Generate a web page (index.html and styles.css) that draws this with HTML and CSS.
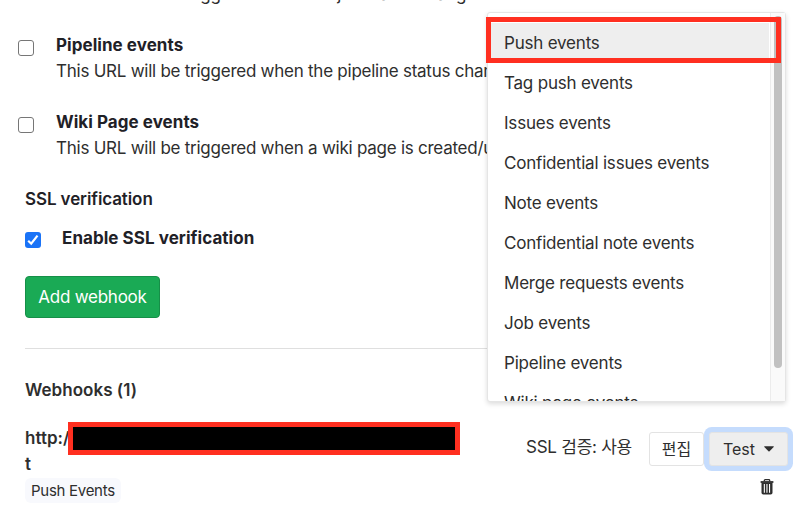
FILE: index.html
```html
<!DOCTYPE html>
<html lang="ko">
<head>
<meta charset="utf-8">
<title>Webhooks</title>
<link rel="stylesheet" href="styles.css">
</head>
<body>
<main class="page">
  <section class="triggers">
    <div class="trigger first">
      <span class="box-space"></span>
      <div class="trigger-text"><p class="desc">This URL will be triggered when the job status changes</p></div>
    </div>
    <div class="trigger">
      <input type="checkbox" class="check" id="pipeline">
      <div class="trigger-text">
        <label class="label" for="pipeline">Pipeline events</label>
        <p class="desc">This URL will be triggered when the pipeline status changes</p>
      </div>
    </div>
    <div class="trigger">
      <input type="checkbox" class="check" id="wiki">
      <div class="trigger-text">
        <label class="label" for="wiki">Wiki Page events</label>
        <p class="desc">This URL will be triggered when a wiki page is created/updated</p>
      </div>
    </div>
  </section>
  <h2 class="ssl-title">SSL verification</h2>
  <div class="ssl-row">
    <input type="checkbox" class="check" id="ssl" checked>
    <label class="label" for="ssl">Enable SSL verification</label>
  </div>
  <button class="add"><span>Add webhook</span></button>
  <hr class="rule">
  <h2 class="hooks-title">Webhooks (1)</h2>
  <div class="hook">
    <div class="hook-info">
      <div class="url"><span class="url-text">http:/</span><span class="redacted"></span></div>
      <div class="url url-end">t</div>
      <span class="badge">Push Events</span>
    </div>
    <div class="hook-side">
      <div class="actions">
        <span class="ssl-state">SSL 검증: 사용</span>
        <button class="btn edit">편집</button>
        <div class="test-wrap">
          <button class="btn test">Test<svg class="caret" width="10" height="6" viewBox="0 0 10 6"><path d="M.5.3h9q.5.2.2.6L5.5 5.3q-.5.4-1 0L.3.9Q0 .5.5.3z" fill="#2e2e2e"/></svg></button>
          <div class="menu">
            <ul class="items">
              <li class="item active">Push events</li>
              <li class="item">Tag push events</li>
              <li class="item">Issues events</li>
              <li class="item">Confidential issues events</li>
              <li class="item">Note events</li>
              <li class="item">Confidential note events</li>
              <li class="item">Merge requests events</li>
              <li class="item">Job events</li>
              <li class="item">Pipeline events</li>
              <li class="item">Wiki page events</li>
            </ul>
            <div class="track"><div class="thumb"></div></div>
            <div class="highlight"></div>
          </div>
        </div>
      </div>
      <svg class="trash" width="14" height="16" viewBox="0 0 14 16"><path d="M4.3 2.2V1.5Q4.3.7 5.2.7h3.6q.9 0 .9.8v.7" fill="none" stroke="#2e2e2e" stroke-width="1.3"/><path d="M.6 2.1h12.8v1.8H.6z" fill="#2e2e2e"/><path fill-rule="evenodd" d="M1.5 3.5h11v10.2q0 1.8-1.8 1.8H3.3q-1.8 0-1.8-1.8zM3.8 5v8.7h1.1V5zm2.6 0v8.7h1.1V5zm2.6 0v8.7h1.1V5z" fill="#2e2e2e"/></svg>
    </div>
  </div>
</main>
</body>
</html>
```
FILE: styles.css
```css
* { box-sizing: border-box; }
body { margin: 0; background: #fff; color: #2e2e2e; font: 17px/26px Inter, "Noto Sans CJK KR", sans-serif; overflow: hidden; }
p, h2, ul { margin: 0; padding: 0; }
button { font: inherit; color: inherit; margin: 0; }
.page { width: 794px; height: 509px; overflow: hidden; display: flex; flex-direction: column; align-items: stretch; }
.triggers { display: flex; flex-direction: column; gap: 25px; margin-top: -19px; padding-left: 18px; }
.trigger { display: flex; gap: 22px; white-space: nowrap; }
.box-space { width: 16px; }
.check { appearance: none; flex: none; width: 16px; height: 16px; margin: 8px 0 0; border: 1px solid #767676; border-radius: 3px; background: #fff; }
.check:checked { border: 0; background: #1a73f7 url("data:image/svg+xml,%3Csvg xmlns='http://www.w3.org/2000/svg' viewBox='0 0 16 16'%3E%3Cpath d='M3.2 8.7l3 3L12.5 3.6' fill='none' stroke='white' stroke-width='2.2'/%3E%3C/svg%3E"); }
.label { display: block; font-weight: 700; color: #1f2127; letter-spacing: 0.05px; }
.desc { letter-spacing: -0.25px; }
.ssl-title { font-size: 17px; font-weight: 600; letter-spacing: -0.1px; color: #1f2127; line-height: 26px; margin: 25px 0 0 25px; }
.ssl-row { display: flex; gap: 21px; margin: 13px 0 0 25px; }
.ssl-row .check { margin-top: 7px; }
.add { align-self: flex-start; width: 135px; height: 42px; margin: 25px 0 0 25px; padding: 0; border: 1px solid #168f48; border-radius: 4px; background: #1aaa55; color: #fff; letter-spacing: -0.25px; }
.rule { width: 761px; height: 1px; border: 0; background: #dfdfdf; margin: 30px 0 0 25px; }
.hooks-title { font-size: 17px; font-weight: 600; line-height: 26px; letter-spacing: 0.03px; margin: 28px 0 0 25px; }
.hook { display: flex; justify-content: space-between; padding: 19px 6px 0 25px; }
.url { display: flex; height: 26px; font-weight: 600; line-height: 32px; }
.url-text { width: 43px; letter-spacing: 0; }
.redacted { width: 392px; height: 33px; border: 5px solid #ff2f20; background: #000; z-index: 1; }
.badge { display: block; width: 96px; height: 25px; margin-top: 4px; padding-left: 6px; border-radius: 6px; background: #f8f9fd; font-size: 15px; line-height: 25px; letter-spacing: -0.28px; }
.url-end { line-height: 32px; }
.hook-side { display: flex; flex-direction: column; align-items: flex-end; padding-top: 10px; }
.actions { display: flex; }
.ssl-state { white-space: nowrap; line-height: 30px; margin-right: 17px; letter-spacing: -0.25px; }
.btn { height: 34px; border: 1px solid #e3e3e3; border-radius: 3px; background: #fff; padding: 0; font-size: 16px; line-height: 30px; }
.edit { width: 55px; }
.test-wrap { position: relative; margin-left: 5px; }
.test { display: flex; align-items: center; justify-content: center; gap: 9px; width: 79px; background: #eee; box-shadow: 0 0 0 5px #c5dcfd; }
.menu { position: absolute; right: 2px; bottom: calc(100% + 30px); display: flex; width: 299px; height: 390px; background: #fff; border: 1px solid #e5e5e5; border-radius: 3px; box-shadow: 0 2px 5px rgba(0,0,0,.14); }
.items { flex: 1; list-style: none; padding: 10px 1px 0 0; overflow: hidden; }
.item { height: 40px; line-height: 40px; padding-left: 16px; letter-spacing: -0.2px; white-space: nowrap; }
.active { background: #eee; }
.track { width: 15px; border-left: 1px solid #ececec; background: #fafafa; padding: 3px 0 0 3px; }
.thumb { width: 8px; height: 352px; border-radius: 4px; background: #c1c1c1; }
.highlight { position: absolute; left: -2px; top: 4px; width: 295px; height: 46px; border: 5px solid #ff2f20; }
.trash { margin: 13px 14px 0 0; }
```
